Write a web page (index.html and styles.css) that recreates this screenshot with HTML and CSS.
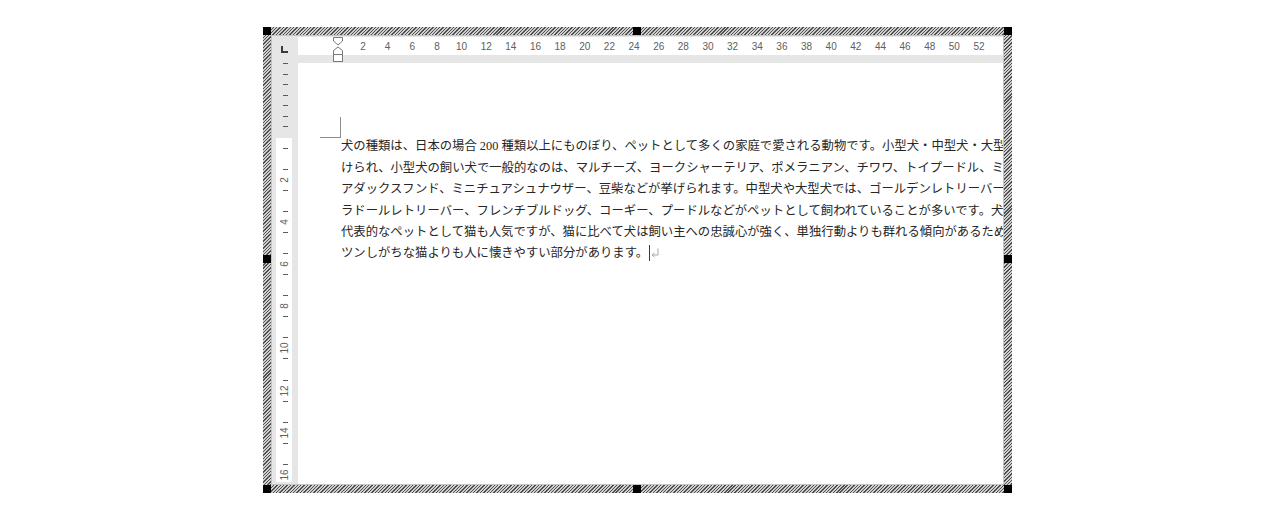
FILE: index.html
```html
<!DOCTYPE html>
<html lang="ja">
<head>
<meta charset="utf-8">
<title>Document</title>
<link rel="stylesheet" href="styles.css">
</head>
<body>
<div class="frame">
  <div class="sheet">
    <div class="corner"><span class="tab-l"></span></div>
    <div class="hruler">
      <div class="hband">
        <span>2</span><span>4</span><span>6</span><span>8</span><span>10</span><span>12</span><span>14</span><span>16</span><span>18</span><span>20</span><span>22</span><span>24</span><span>26</span><span>28</span><span>30</span><span>32</span><span>34</span><span>36</span><span>38</span><span>40</span><span>42</span><span>44</span><span>46</span><span>48</span><span>50</span><span>52</span>
      </div>
      <svg class="indent" width="10" height="27" viewBox="0 0 10 27">
        <polygon points="0.5,0.5 9.5,0.5 9.5,4 5,8 0.5,4" fill="#fff" stroke="#7a7a7a" stroke-width="1"/>
        <polygon points="5,10 9.5,13.5 9.5,17.5 0.5,17.5 0.5,13.5" fill="#fff" stroke="#7a7a7a" stroke-width="1"/>
        <rect x="0.5" y="17.5" width="9" height="7" fill="#fff" stroke="#7a7a7a" stroke-width="1"/>
      </svg>
    </div>
    <div class="vruler">
      <div class="vcol">
        <div class="r"><i></i></div><div class="r"><i></i></div><div class="r"><i></i></div><div class="r"><i></i></div><div class="r"><i></i></div><div class="r"><i></i></div><div class="r"><i></i></div>
        <div class="r"></div>
        <div class="r"><i></i></div><div class="r"></div><div class="r"><i></i></div><div class="r"><b>2</b></div>
        <div class="r"><i></i></div><div class="r"></div><div class="r"><i></i></div><div class="r"><b>4</b></div>
        <div class="r"><i></i></div><div class="r"></div><div class="r"><i></i></div><div class="r"><b>6</b></div>
        <div class="r"><i></i></div><div class="r"></div><div class="r"><i></i></div><div class="r"><b>8</b></div>
        <div class="r"><i></i></div><div class="r"></div><div class="r"><i></i></div><div class="r"><b>10</b></div>
        <div class="r"><i></i></div><div class="r"></div><div class="r"><i></i></div><div class="r"><b>12</b></div>
        <div class="r"><i></i></div><div class="r"></div><div class="r"><i></i></div><div class="r"><b>14</b></div>
        <div class="r"><i></i></div><div class="r"></div><div class="r"><i></i></div><div class="r"><b>16</b></div>
      </div>
    </div>
    <div class="page">
      <div class="cropmark"></div>
      <div class="text">
        <div class="line">犬の種類は、日本の場合 200 種類以上にものぼり、ペットとして多くの家庭で愛される動物です。小型犬・中型犬・大型犬に分</div>
        <div class="line">けられ、小型犬の飼い犬で一般的なのは、マルチーズ、ヨークシャーテリア、ポメラニアン、チワワ、トイプードル、ミニチュ</div>
        <div class="line">アダックスフンド、ミニチュアシュナウザー、豆柴などが挙げられます。中型犬や大型犬では、ゴールデンレトリーバー、</div>
        <div class="line">ラドールレトリーバー、フレンチブルドッグ、コーギー、プードルなどがペットとして飼われていることが多いです。犬と</div>
        <div class="line">代表的なペットとして猫も人気ですが、猫に比べて犬は飼い主への忠誠心が強く、単独行動よりも群れる傾向があるため、</div>
        <div class="line">ツンしがちな猫よりも人に懐きやすい部分があります。<span class="caret"></span><svg class="ret" width="8" height="10" viewBox="0 0 8 10"><path d="M7 0.5 V7 H1.5" fill="none" stroke="#a8a8a8" stroke-width="1"/><path d="M3.5 5 L1 7 L3.5 9" fill="none" stroke="#a8a8a8" stroke-width="1"/></svg></div>
      </div>
    </div>
  </div>
  <span class="h tl"></span><span class="h tm"></span><span class="h tr"></span>
  <span class="h ml"></span><span class="h mr"></span>
  <span class="h bl"></span><span class="h bm"></span><span class="h br"></span>
</div>
</body>
</html>
```

FILE: styles.css
```css
html, body {
  margin: 0;
  padding: 0;
  background: #fff;
}

body {
  padding: 27px 0 0 263px;
  height: 518px;
  box-sizing: border-box;
  overflow: hidden;
}

.frame {
  position: relative;
  width: 749px;
  height: 466px;
  box-sizing: border-box;
  padding: 9px;
  background: repeating-linear-gradient(135deg, #505050 0 1px, #cfcfcf 1px 2.4px);
}

.sheet {
  width: 731px;
  height: 448px;
  display: grid;
  grid-template-columns: 26px 1fr;
  grid-template-rows: 27px 1fr;
  background: #fff;
  overflow: hidden;
  box-shadow: 0 0 0 1px #c4c4c4;
}

.corner {
  background: #e6e6e6;
  display: flex;
  align-items: flex-start;
  padding: 10px 0 0 9px;
  box-sizing: border-box;
}

.tab-l {
  display: block;
  width: 5px;
  height: 5px;
  border-left: 2px solid #3a3a3a;
  border-bottom: 2px solid #3a3a3a;
}

.hruler {
  position: relative;
  background: #e6e6e6;
}

.hband {
  margin-top: 1px;
  height: 18px;
  background: #fff;
  display: flex;
  align-items: center;
  padding-left: 52.7px;
}

.hband span {
  flex: 0 0 24.65px;
  text-align: center;
  font-family: "Liberation Sans", Arial, sans-serif;
  font-size: 10px;
  color: #606060;
}

.indent {
  position: absolute;
  left: 35px;
  top: 1px;
}

.vruler {
  background-color: #e6e6e6;
  background-image: linear-gradient(#fff, #fff);
  background-repeat: no-repeat;
  background-position: 4px 75px;
  background-size: 16px 344px;
  overflow: hidden;
}

.vcol {
  margin-top: -4.6px;
  display: flex;
  flex-direction: column;
}

.r {
  height: 10.55px;
  flex: 0 0 10.55px;
  display: flex;
  align-items: center;
  justify-content: center;
}

.r i {
  display: block;
  width: 5px;
  height: 1px;
  background: #5a5a5a;
}

.r b {
  display: block;
  font-weight: normal;
  font-family: "Liberation Sans", Arial, sans-serif;
  font-size: 10px;
  line-height: 10px;
  color: #606060;
  transform: rotate(-90deg);
  white-space: nowrap;
}

.page {
  background: #fff;
  overflow: hidden;
}

.cropmark {
  width: 20px;
  height: 20px;
  margin: 54px 0 0 22px;
  border-right: 1px solid #8c8c8c;
  border-bottom: 1px solid #8c8c8c;
}

.text {
  margin-top: -1.7px;
  padding-left: 43px;
  font-family: "Liberation Serif", "Noto Sans CJK JP", serif;
  font-size: 12.35px;
  line-height: 21.4px;
  color: #262626;
}

.line {
  white-space: nowrap;
}

.caret {
  display: inline-block;
  width: 1px;
  height: 16px;
  background: #3a3a3a;
  vertical-align: -4px;
  margin-left: 0.5px;
}

.ret {
  display: inline-block;
  vertical-align: -1px;
  margin-left: 1px;
}

.h {
  position: absolute;
  width: 8px;
  height: 8px;
  background: #000;
}

.tl { left: 0; top: 0; }
.tm { left: 370px; top: 0; }
.tr { right: 0; top: 0; }
.ml { left: 0; top: 228px; }
.mr { right: 0; top: 228px; }
.bl { left: 0; bottom: 0; }
.bm { left: 370px; bottom: 0; }
.br { right: 0; bottom: 0; }
```
